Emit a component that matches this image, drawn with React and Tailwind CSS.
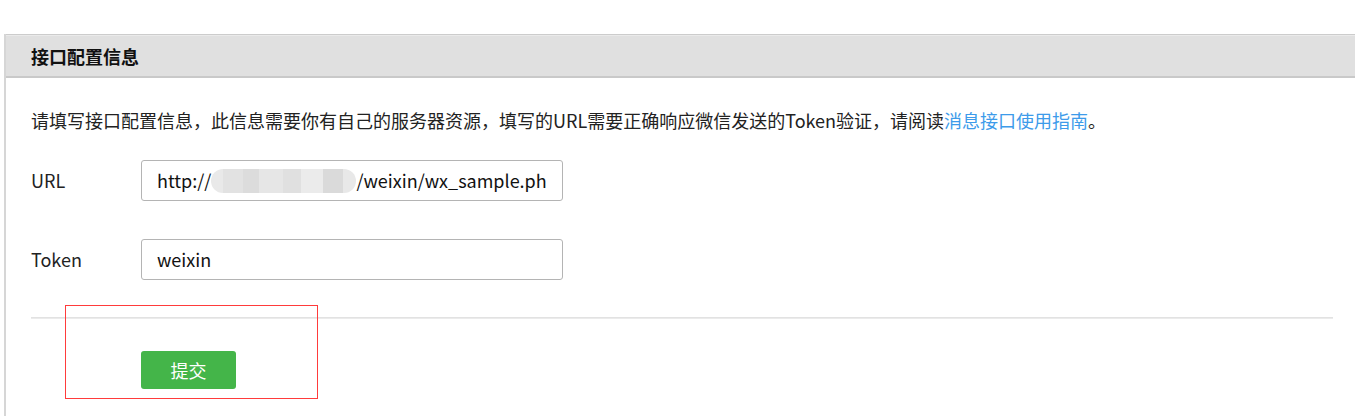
import React from "react";

export default function App() {
  const font = { fontFamily: '"Noto Sans CJK SC", "Noto Sans", sans-serif' };
  return (
    <div className="w-[1355px] h-[416px] bg-white overflow-hidden relative" style={font}>
      <div className="ml-[4px] mt-[34px] border-l-2 border-[#d6d6d6] h-[382px]">
        <div className="h-[44px] bg-[#e0e0e0] border-t border-[#cccccc] border-b-2 border-b-[#c9c9c9] shadow-[inset_0_1px_0_#eaeaea] flex items-center pl-[25px]">
          <span className="text-[18px] font-bold text-[#111] leading-none">接口配置信息</span>
        </div>
        <div className="pl-[25px] pr-[22px]">
          <p className="mt-[30px] text-[18px] leading-[24px] text-[#222]">
            请填写接口配置信息，此信息需要你有自己的服务器资源，填写的URL需要正确响应微信发送的Token验证，请阅读
            <span className="text-[#3d9bea]">消息接口使用指南</span>。
          </p>
          <div className="mt-[28px] flex items-center h-[41px]">
            <span className="w-[110px] text-[18px] text-[#222]">URL</span>
            <div className="w-[422px] h-[41px] border border-[#b4b4b4] rounded-[3px] flex items-center pl-[15px] pr-[8px]">
              <div className="flex items-center whitespace-nowrap text-[18px] text-[#111] w-full">
                <span>http://</span>
                <span className="flex h-[24px] w-[145px] shrink-0 rounded-full overflow-hidden">
                  <span className="w-[12px] bg-[#e9e9e9]"></span>
                  <span className="w-[20px] bg-[#e2e2e2]"></span>
                  <span className="w-[16px] bg-[#dcdcdc]"></span>
                  <span className="w-[24px] bg-[#e6e6e6]"></span>
                  <span className="w-[18px] bg-[#e0e0e0]"></span>
                  <span className="w-[22px] bg-[#ebebeb]"></span>
                  <span className="w-[20px] bg-[#dadada]"></span>
                  <span className="w-[13px] bg-[#e8e8e8]"></span>
                </span>
                <span>/weixin/wx_sample.ph</span>
              </div>
            </div>
          </div>
          <div className="mt-[38px] flex items-center h-[41px]">
            <span className="w-[110px] text-[18px] text-[#222]">Token</span>
            <div className="w-[422px] h-[41px] border border-[#b4b4b4] rounded-[3px] flex items-center pl-[15px] text-[18px] text-[#111]">
              weixin
            </div>
          </div>
          <div className="mt-[37px] h-[2px] bg-[#ebebeb] border-t border-[#e2e2e2]"></div>
          <div className="mt-[32px] pl-[110px]">
            <button className="w-[95px] h-[38px] bg-[#44b549] rounded-[3px] text-white text-[18px] flex items-center justify-center">
              提交
            </button>
          </div>
        </div>
      </div>
      <div className="absolute left-[65px] top-[305px] w-[253px] h-[94px] border border-[#ff3b3b] pointer-events-none"></div>
    </div>
  );
}
